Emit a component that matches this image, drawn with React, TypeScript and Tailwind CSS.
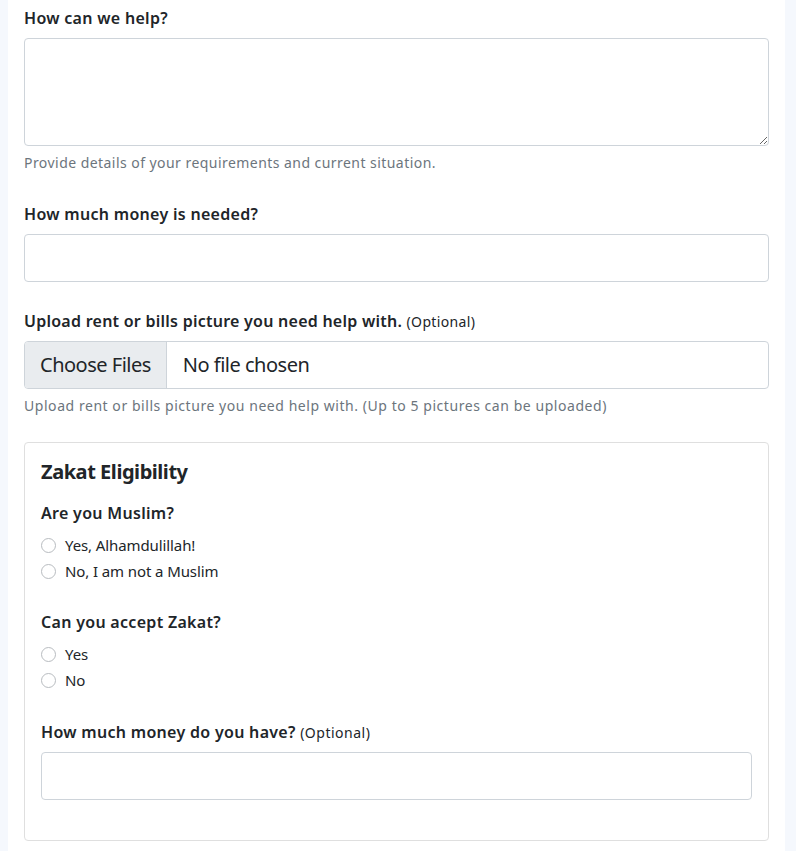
import React from 'react';

const font = { fontFamily: '"Segoe UI", "Noto Sans", "Liberation Sans", sans-serif' };

const Radio: React.FC<{ label: string; name: string }> = ({ label, name }) => (
  <label className="flex h-[26px] items-center gap-[9px] text-[15px] tracking-[-0.1px] text-[#212529]">
    <input type="radio" name={name} className="sr-only" />
    <span className="h-[15px] w-[15px] rounded-full border border-[#b8bcc0] bg-white" />
    <span>{label}</span>
  </label>
);

const App: React.FC = () => {
  return (
    <div className="min-h-screen bg-[#f5f8fd] pl-[8px] pr-[11px]" style={font}>
      <div className="min-h-screen bg-white px-4 pb-4 pt-[6px] text-[#212529]">
        {/* details */}
        <label className="mb-2 block text-base font-semibold leading-6 tracking-[0.3px]">How can we help?</label>
        <textarea className="block h-[108px] w-full resize-y rounded border border-[#ced4da] bg-white px-3 py-2 outline-none" />
        <p className="mt-[6px] text-sm leading-[21px] tracking-[0.45px] text-[#6c757d]">
          Provide details of your requirements and current situation.
        </p>

        {/* amount */}
        <label className="mb-2 mt-[29px] block text-base font-semibold leading-6 tracking-[0.3px]">
          How much money is needed?
        </label>
        <input
          type="text"
          className="block h-12 w-full rounded border border-[#ced4da] bg-white px-4 text-xl outline-none"
        />

        {/* upload */}
        <label className="mb-2 mt-[27px] block text-base font-semibold leading-6 tracking-[0.25px]">
          Upload rent or bills picture you need help with.{' '}
          <span className="text-sm font-normal tracking-[0.35px]">(Optional)</span>
        </label>
        <div className="flex h-12 w-full overflow-hidden rounded border border-[#ced4da] text-xl tracking-[-0.5px]">
          <div className="flex items-center border-r border-[#ced4da] bg-[#e9ecef] px-[15px]">Choose Files</div>
          <div className="flex items-center px-4">No file chosen</div>
        </div>
        <p className="mt-[6px] text-sm leading-[21px] tracking-[0.55px] text-[#6c757d]">
          Upload rent or bills picture you need help with. (Up to 5 pictures can be uploaded)
        </p>

        {/* zakat card */}
        <div className="mt-[26px] rounded border border-[#dfdfdf] px-4 pb-4 pt-[17px]">
          <h5 className="mb-[17px] text-xl font-bold leading-6 tracking-[-0.45px]">Zakat Eligibility</h5>

          <label className="mb-[7px] block text-base font-semibold leading-6 tracking-[0.3px]">Are you Muslim?</label>
          <Radio name="muslim" label="Yes, Alhamdulillah!" />
          <Radio name="muslim" label="No, I am not a Muslim" />

          <label className="mb-[7px] mt-[26px] block text-base font-semibold leading-6 tracking-[0.3px]">
            Can you accept Zakat?
          </label>
          <Radio name="zakat" label="Yes" />
          <Radio name="zakat" label="No" />

          <label className="mb-2 mt-[27px] block text-base font-semibold leading-6 tracking-[0.3px]">
            How much money do you have?{' '}
            <span className="text-sm font-normal tracking-[0.5px]">(Optional)</span>
          </label>
          <input
            type="text"
            className="mb-6 block h-12 w-full rounded border border-[#ced4da] bg-white px-4 text-xl outline-none"
          />
        </div>
      </div>
    </div>
  );
};

export default App;
